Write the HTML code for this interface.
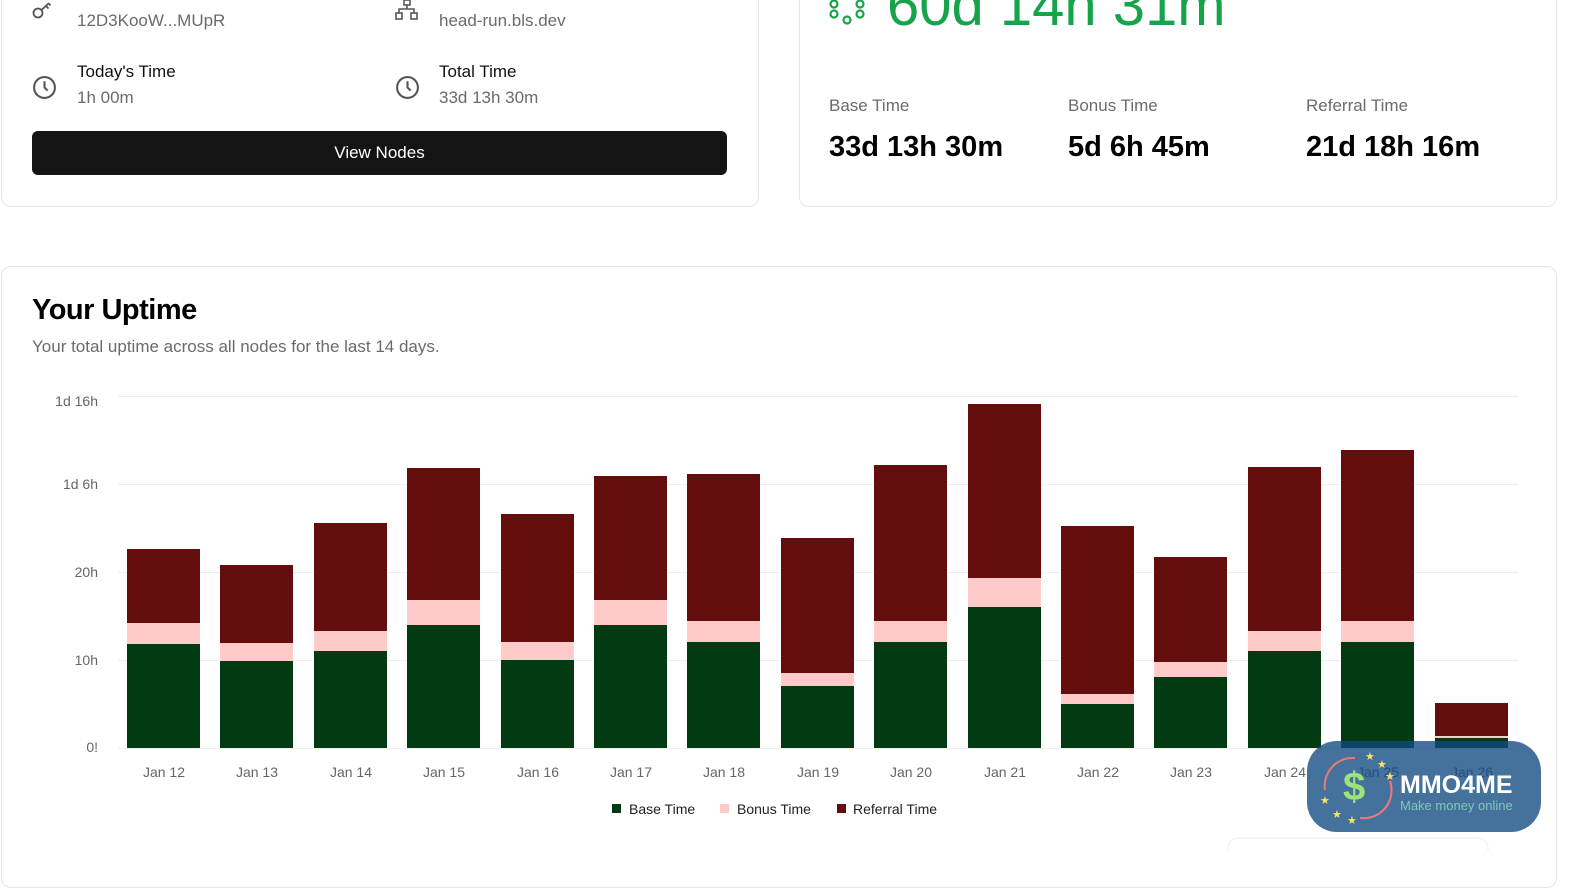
<!DOCTYPE html>
<html><head><meta charset="utf-8"><style>
body{margin:0;width:1573px;height:851px;overflow:hidden;background:#fff;font-family:"Liberation Sans",sans-serif;position:relative}
.card{position:absolute;border:1px solid #e5e5e5;border-radius:10px;background:#fff}
.t{position:absolute;white-space:nowrap}
</style></head><body>
<div class="card" style="left:1px;top:-20px;width:756px;height:225px"></div>
<div class="card" style="left:799px;top:-20px;width:756px;height:225px"></div>
<div class="card" style="left:1px;top:266px;width:1554px;height:620px"></div>

<svg style="position:absolute;left:30px;top:0" width="30" height="30" viewBox="0 0 30 30" fill="none" stroke="#555" stroke-width="1.8"><circle cx="8" cy="13" r="4.5"/><path d="M11.5 10 L19 3 M16 6 l2.5 2.5 M18.5 3.5 l2 2"/></svg>
<svg style="position:absolute;left:393px;top:0" width="30" height="24" viewBox="0 0 30 24" fill="none" stroke="#555" stroke-width="1.6"><rect x="11" y="0" width="6" height="5"/><rect x="3" y="13" width="6" height="6"/><rect x="18" y="13" width="6" height="6"/><path d="M14 5v4M6 13V9h15v4"/></svg>
<div class="t" style="left:77px;top:11px;font-size:17px;color:#6b6b6b">12D3KooW...MUpR</div>
<div class="t" style="left:439px;top:11px;font-size:17px;color:#6b6b6b">head-run.bls.dev</div>
<svg style="position:absolute;left:32px;top:75px" width="25" height="25" viewBox="0 0 24 24" fill="none" stroke="#555" stroke-width="2"><circle cx="12" cy="12" r="10"/><path d="M12 6v6l3 3"/></svg>
<svg style="position:absolute;left:395px;top:75px" width="25" height="25" viewBox="0 0 24 24" fill="none" stroke="#555" stroke-width="2"><circle cx="12" cy="12" r="10"/><path d="M12 6v6l3 3"/></svg>
<div class="t" style="left:77px;top:62px;font-size:17px;color:#111">Today's Time</div>
<div class="t" style="left:77px;top:88px;font-size:17px;color:#6b6b6b">1h 00m</div>
<div class="t" style="left:439px;top:62px;font-size:17px;color:#111">Total Time</div>
<div class="t" style="left:439px;top:88px;font-size:17px;color:#6b6b6b">33d 13h 30m</div>
<div style="position:absolute;left:32px;top:131px;width:695px;height:44px;background:#141414;border-radius:6px;color:#fff;font-size:17px;text-align:center;line-height:44px">View Nodes</div>

<svg style="position:absolute;left:828px;top:0" width="40" height="26" viewBox="0 0 40 26" fill="none" stroke="#16a34a" stroke-width="2.2"><circle cx="6" cy="4" r="3.5"/><circle cx="32" cy="4" r="3.5"/><circle cx="6" cy="14" r="3.5"/><circle cx="32" cy="14" r="3.5"/><circle cx="19" cy="20" r="3.5"/></svg>
<div class="t" style="left:887px;top:-28px;font-size:58px;color:#16a34a">60d 14h 31m</div>
<div class="t" style="left:829px;top:96px;font-size:17px;color:#6b6b6b">Base Time</div>
<div class="t" style="left:1068px;top:96px;font-size:17px;color:#6b6b6b">Bonus Time</div>
<div class="t" style="left:1306px;top:96px;font-size:17px;color:#6b6b6b">Referral Time</div>
<div class="t" style="left:829px;top:131px;font-size:29px;font-weight:bold;color:#000">33d 13h 30m</div>
<div class="t" style="left:1068px;top:131px;font-size:29px;font-weight:bold;color:#000">5d 6h 45m</div>
<div class="t" style="left:1306px;top:131px;font-size:29px;font-weight:bold;color:#000">21d 18h 16m</div>

<div class="t" style="left:32px;top:294px;font-size:29px;font-weight:bold;color:#000;letter-spacing:-0.5px">Your Uptime</div>
<div class="t" style="left:32px;top:337px;font-size:17px;color:#6b6b6b">Your total uptime across all nodes for the last 14 days.</div>

<svg style="position:absolute;left:0;top:0" width="1573" height="851" font-family="Liberation Sans, sans-serif">
<g stroke="#eee" stroke-width="1"><line x1="118" x2="1518" y1="396.5" y2="396.5"/><line x1="118" x2="1518" y1="484.5" y2="484.5"/><line x1="118" x2="1518" y1="572.5" y2="572.5"/><line x1="118" x2="1518" y1="660.5" y2="660.5"/><line x1="118" x2="1518" y1="748.5" y2="748.5"/></g>
<g font-size="14" fill="#666" text-anchor="end"><text x="98" y="406">1d 16h</text><text x="98" y="489">1d 6h</text><text x="98" y="577">20h</text><text x="98" y="665">10h</text><text x="98" y="752">0!</text></g>
<g id="bars">
<rect x="127" y="549" width="73" height="74" fill="#630d0d"/><rect x="127" y="623" width="73" height="21" fill="#fecaca"/><rect x="127" y="644" width="73" height="104" fill="#023a12"/>
<rect x="220" y="565" width="73" height="78" fill="#630d0d"/><rect x="220" y="643" width="73" height="18" fill="#fecaca"/><rect x="220" y="661" width="73" height="87" fill="#023a12"/>
<rect x="314" y="523" width="73" height="108" fill="#630d0d"/><rect x="314" y="631" width="73" height="20" fill="#fecaca"/><rect x="314" y="651" width="73" height="97" fill="#023a12"/>
<rect x="407" y="468" width="73" height="132" fill="#630d0d"/><rect x="407" y="600" width="73" height="25" fill="#fecaca"/><rect x="407" y="625" width="73" height="123" fill="#023a12"/>
<rect x="501" y="514" width="73" height="128" fill="#630d0d"/><rect x="501" y="642" width="73" height="18" fill="#fecaca"/><rect x="501" y="660" width="73" height="88" fill="#023a12"/>
<rect x="594" y="476" width="73" height="124" fill="#630d0d"/><rect x="594" y="600" width="73" height="25" fill="#fecaca"/><rect x="594" y="625" width="73" height="123" fill="#023a12"/>
<rect x="687" y="474" width="73" height="147" fill="#630d0d"/><rect x="687" y="621" width="73" height="21" fill="#fecaca"/><rect x="687" y="642" width="73" height="106" fill="#023a12"/>
<rect x="781" y="538" width="73" height="135" fill="#630d0d"/><rect x="781" y="673" width="73" height="13" fill="#fecaca"/><rect x="781" y="686" width="73" height="62" fill="#023a12"/>
<rect x="874" y="465" width="73" height="156" fill="#630d0d"/><rect x="874" y="621" width="73" height="21" fill="#fecaca"/><rect x="874" y="642" width="73" height="106" fill="#023a12"/>
<rect x="968" y="404" width="73" height="174" fill="#630d0d"/><rect x="968" y="578" width="73" height="29" fill="#fecaca"/><rect x="968" y="607" width="73" height="141" fill="#023a12"/>
<rect x="1061" y="526" width="73" height="168" fill="#630d0d"/><rect x="1061" y="694" width="73" height="10" fill="#fecaca"/><rect x="1061" y="704" width="73" height="44" fill="#023a12"/>
<rect x="1154" y="557" width="73" height="105" fill="#630d0d"/><rect x="1154" y="662" width="73" height="15" fill="#fecaca"/><rect x="1154" y="677" width="73" height="71" fill="#023a12"/>
<rect x="1248" y="467" width="73" height="164" fill="#630d0d"/><rect x="1248" y="631" width="73" height="20" fill="#fecaca"/><rect x="1248" y="651" width="73" height="97" fill="#023a12"/>
<rect x="1341" y="450" width="73" height="171" fill="#630d0d"/><rect x="1341" y="621" width="73" height="21" fill="#fecaca"/><rect x="1341" y="642" width="73" height="106" fill="#023a12"/>
<rect x="1435" y="703" width="73" height="33" fill="#630d0d"/><rect x="1435" y="736" width="73" height="2" fill="#fecaca"/><rect x="1435" y="738" width="73" height="10" fill="#023a12"/>
</g>
<g font-size="14" fill="#666" text-anchor="middle">
<text x="164" y="777">Jan 12</text><text x="257" y="777">Jan 13</text><text x="351" y="777">Jan 14</text><text x="444" y="777">Jan 15</text><text x="538" y="777">Jan 16</text><text x="631" y="777">Jan 17</text><text x="724" y="777">Jan 18</text><text x="818" y="777">Jan 19</text><text x="911" y="777">Jan 20</text><text x="1005" y="777">Jan 21</text><text x="1098" y="777">Jan 22</text><text x="1191" y="777">Jan 23</text><text x="1285" y="777">Jan 24</text><text x="1378" y="777">Jan 25</text><text x="1472" y="777">Jan 26</text></g>
<g font-size="14" fill="#222"><rect x="612" y="804" width="9" height="9" fill="#023a12"/><text x="629" y="814">Base Time</text><rect x="720" y="804" width="9" height="9" fill="#fecaca"/><text x="737" y="814">Bonus Time</text><rect x="837" y="804" width="9" height="9" fill="#630d0d"/><text x="853" y="814">Referral Time</text></g>
<rect x="1228" y="838" width="260" height="30" rx="10" fill="none" stroke="#eee"/>
<rect x="1307" y="741" width="234" height="91" rx="30" fill="#104a80" fill-opacity="0.78"/>
<path d="M1355 758 a28 28 0 0 0 -30 32" fill="none" stroke="#f07878" stroke-width="2"/>
<path d="M1360 818 a28 28 0 0 0 30 -37" fill="none" stroke="#f07878" stroke-width="2"/>
<text x="1343" y="800" font-size="40" font-weight="bold" fill="#9be37a">$</text>
<g fill="#ffe066" font-size="11"><text x="1365" y="760">★</text><text x="1377" y="768">★</text><text x="1385" y="780">★</text><text x="1320" y="804">★</text><text x="1332" y="818">★</text><text x="1347" y="824">★</text></g>
<text x="1400" y="793" font-size="25" font-weight="bold" fill="#fff">MMO4ME</text>
<text x="1400" y="810" font-size="13" fill="#7fc8b8">Make money online</text>
</svg>
</body></html>
